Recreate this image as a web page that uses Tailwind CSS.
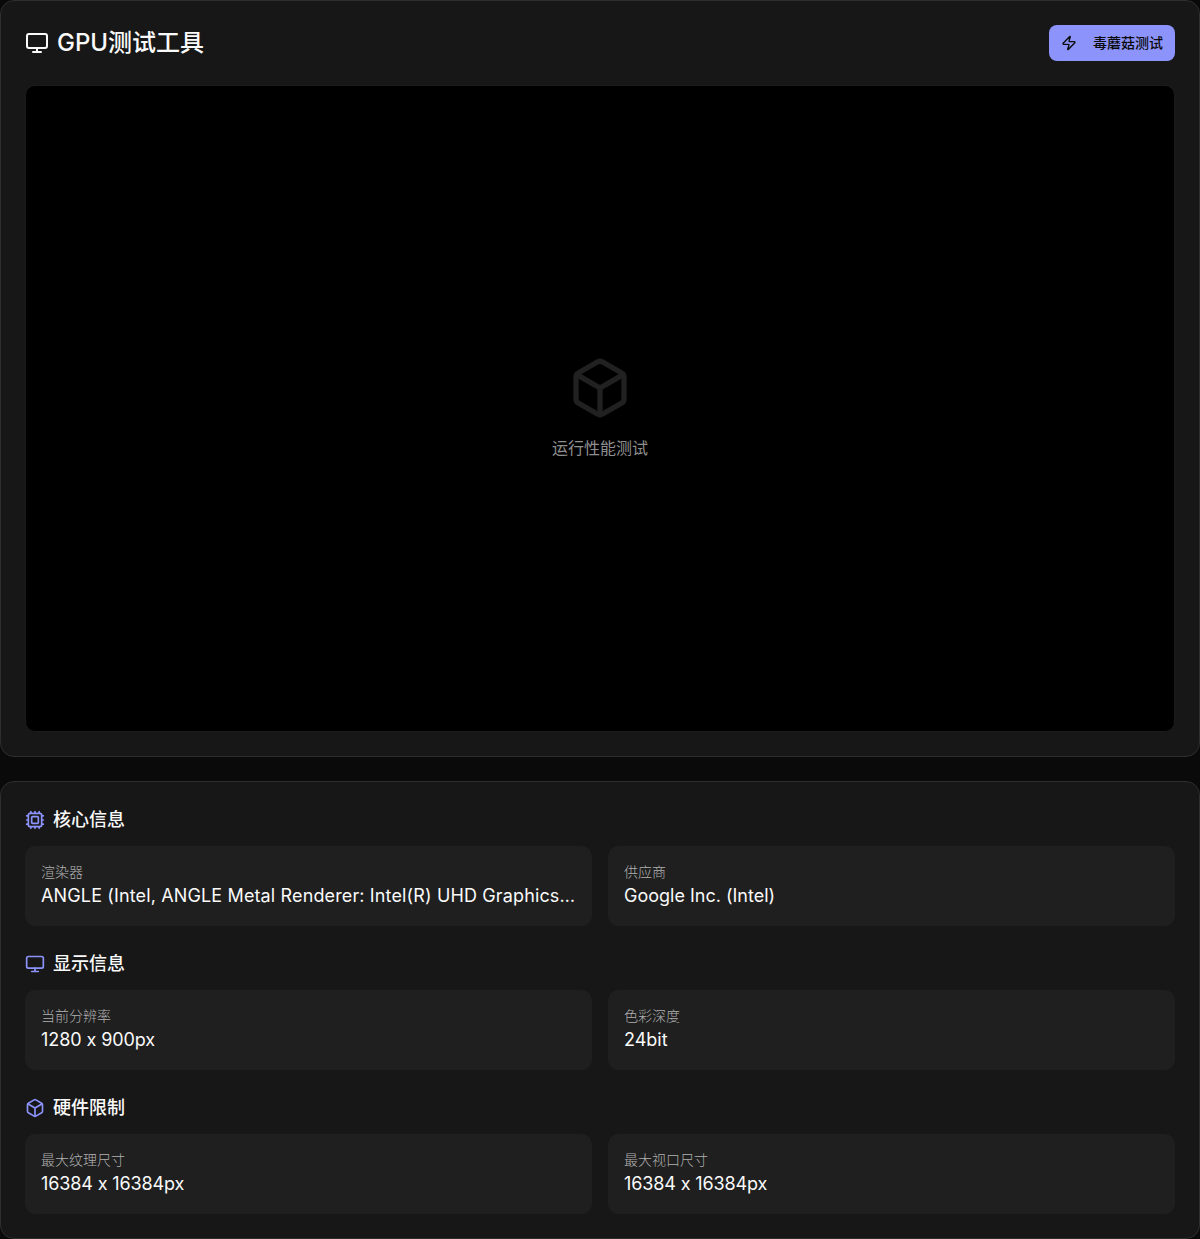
<!DOCTYPE html>
<html lang="zh-CN">
<head>
<meta charset="utf-8">
<title>GPU测试工具</title>
<script src="https://cdn.jsdelivr.net/npm/@tailwindcss/browser@4"></script>
</head>
<body class="bg-[#0a0a0a] text-[#fafafa] font-['Inter','Noto_Sans_CJK_SC',sans-serif] [font-feature-settings:'calt'_0]">
<svg class="hidden">
  <symbol id="monitor" viewBox="0 0 24 24"><rect width="20" height="14" x="2" y="3" rx="2"/><path d="M8 21h8M12 17v4"/></symbol>
  <symbol id="box" viewBox="0 0 24 24"><path d="M21 8a2 2 0 0 0-1-1.73l-7-4a2 2 0 0 0-2 0l-7 4A2 2 0 0 0 3 8v8a2 2 0 0 0 1 1.73l7 4a2 2 0 0 0 2 0l7-4A2 2 0 0 0 21 16Z"/><path d="m3.3 7 8.7 5 8.7-5M12 22V12"/></symbol>
  <symbol id="cpu" viewBox="0 0 24 24"><rect width="16" height="16" x="4" y="4" rx="2"/><rect width="8" height="8" x="8" y="8" rx="1"/><path d="M12 20v2M12 2v2M17 20v2M17 2v2M2 12h2M2 17h2M2 7h2M20 12h2M20 17h2M20 7h2M7 20v2M7 2v2"/></symbol>
  <symbol id="zap" viewBox="0 0 24 24"><path d="M4 14a1 1 0 0 1-.78-1.63l9.9-10.2a.5.5 0 0 1 .86.46l-1.92 6.02A1 1 0 0 0 13 10h7a1 1 0 0 1 .78 1.63l-9.9 10.2a.5.5 0 0 1-.86-.46l1.92-6.02A1 1 0 0 0 11 14z"/></symbol>
</svg>
<main class="flex flex-col gap-6">
  <section class="rounded-[14px] border border-[#2e2e2e] bg-[#171717] p-6">
    <div class="mb-6 flex h-9 items-center justify-between">
      <h1 class="flex items-center gap-2 text-2xl font-medium">
        <svg class="size-6 fill-none stroke-current stroke-2 [stroke-linecap:round] [stroke-linejoin:round]"><use href="#monitor"/></svg>
        <span>GPU测试工具</span>
      </h1>
      <button class="flex h-9 items-center gap-4 rounded-lg bg-[#8c93fb] px-3 text-sm font-medium text-[#0a0a0a]">
        <svg class="size-4 fill-none stroke-current stroke-2 [stroke-linecap:round] [stroke-linejoin:round]"><use href="#zap"/></svg>
        <span>毒蘑菇测试</span>
      </button>
    </div>
    <div class="flex aspect-video flex-col items-center justify-center gap-4 rounded-[10px] border border-[#1b1b1b] bg-black">
      <svg class="size-16 fill-none stroke-[#212121] stroke-2 [stroke-linecap:round] [stroke-linejoin:round]"><use href="#box"/></svg>
      <p class="text-base text-[#8f8f8f]">运行性能测试</p>
    </div>
  </section>
  <section class="flex flex-col gap-6 rounded-[14px] border border-[#2e2e2e] bg-[#171717] p-6">
    <div>
      <h2 class="mb-3 flex items-center gap-2 text-lg font-medium"><svg class="size-5 fill-none stroke-[#8c93fb] stroke-2 [stroke-linecap:round] [stroke-linejoin:round]"><use href="#cpu"/></svg><span>核心信息</span></h2>
      <div class="grid grid-cols-2 gap-4">
        <div class="min-w-0 rounded-[10px] bg-[#1f1f1f] p-4"><p class="text-sm font-light text-[#b0b0b0]">渲染器</p><p class="whitespace-nowrap text-lg tracking-[0.135px]">ANGLE (Intel, ANGLE Metal Renderer: Intel(R) UHD Graphics…</p></div>
        <div class="min-w-0 rounded-[10px] bg-[#1f1f1f] p-4"><p class="text-sm font-light text-[#b0b0b0]">供应商</p><p class="truncate text-lg">Google Inc. (Intel)</p></div>
      </div>
    </div>
    <div>
      <h2 class="mb-3 flex items-center gap-2 text-lg font-medium"><svg class="size-5 fill-none stroke-[#8c93fb] stroke-2 [stroke-linecap:round] [stroke-linejoin:round]"><use href="#monitor"/></svg><span>显示信息</span></h2>
      <div class="grid grid-cols-2 gap-4">
        <div class="min-w-0 rounded-[10px] bg-[#1f1f1f] p-4"><p class="text-sm font-light text-[#b0b0b0]">当前分辨率</p><p class="truncate text-lg tracking-[-0.08px]">1280 x 900px</p></div>
        <div class="min-w-0 rounded-[10px] bg-[#1f1f1f] p-4"><p class="text-sm font-light text-[#b0b0b0]">色彩深度</p><p class="truncate text-lg">24bit</p></div>
      </div>
    </div>
    <div>
      <h2 class="mb-3 flex items-center gap-2 text-lg font-medium"><svg class="size-5 fill-none stroke-[#8c93fb] stroke-2 [stroke-linecap:round] [stroke-linejoin:round]"><use href="#box"/></svg><span>硬件限制</span></h2>
      <div class="grid grid-cols-2 gap-4">
        <div class="min-w-0 rounded-[10px] bg-[#1f1f1f] p-4"><p class="text-sm font-light text-[#b0b0b0]">最大纹理尺寸</p><p class="truncate text-lg tracking-[-0.13px]">16384 x 16384px</p></div>
        <div class="min-w-0 rounded-[10px] bg-[#1f1f1f] p-4"><p class="text-sm font-light text-[#b0b0b0]">最大视口尺寸</p><p class="truncate text-lg tracking-[-0.13px]">16384 x 16384px</p></div>
      </div>
    </div>
  </section>
</main>
</body>
</html>
